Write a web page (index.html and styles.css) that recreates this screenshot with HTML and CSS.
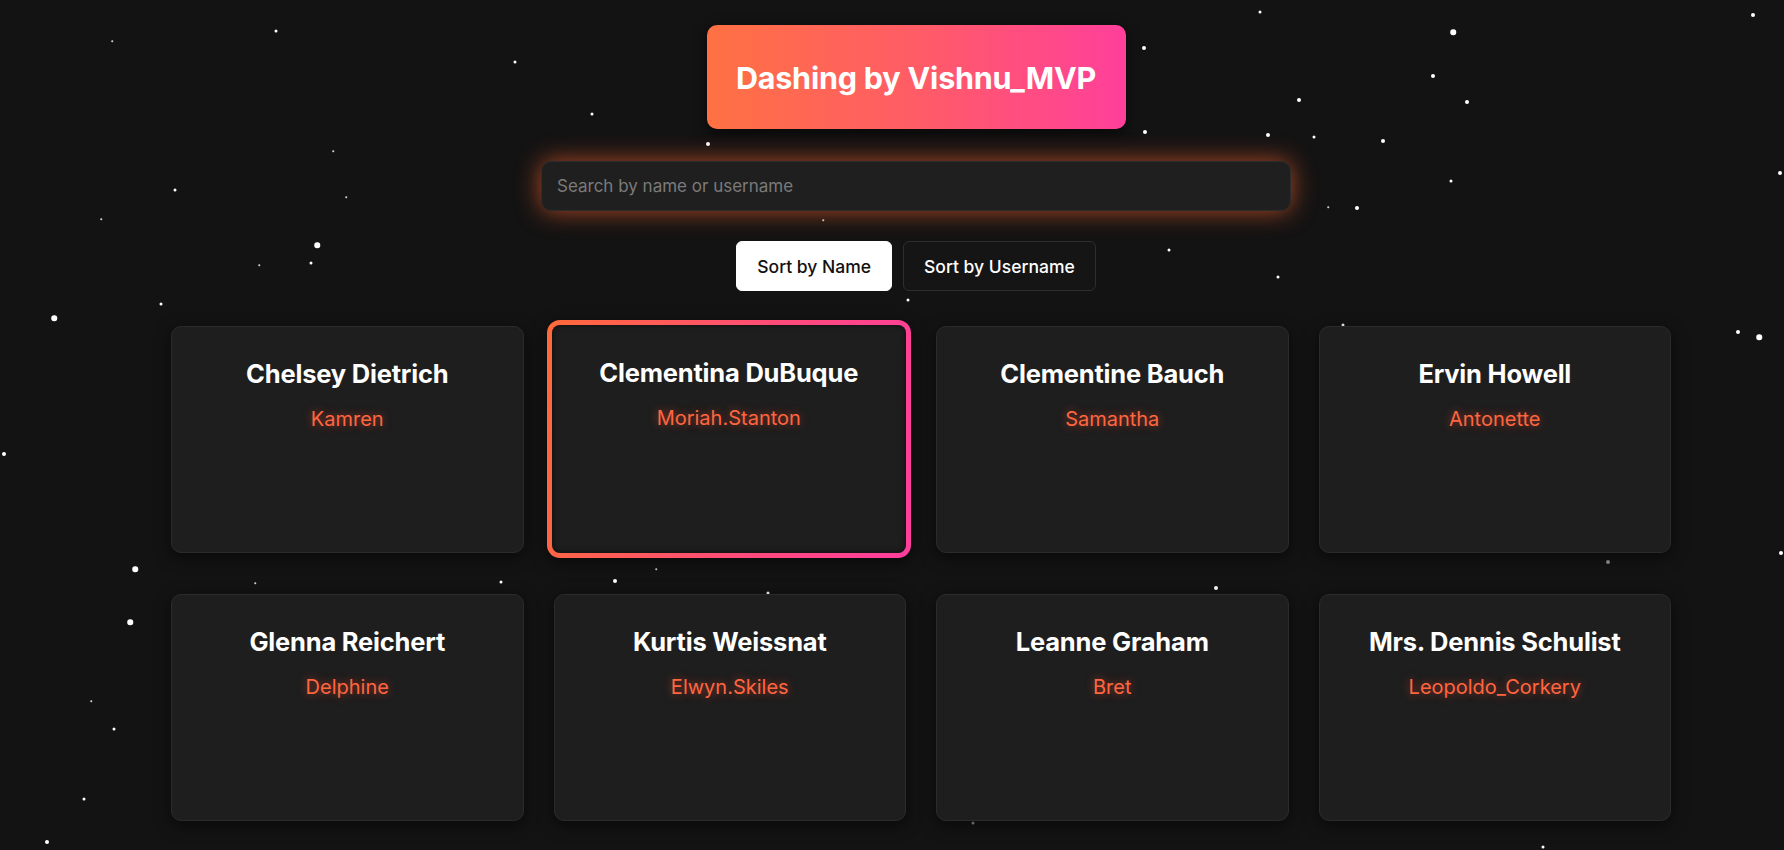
FILE: index.html
```html
<!DOCTYPE html>
<html lang="en">
<head>
<meta charset="utf-8">
<title>Dashing by Vishnu_MVP</title>
<link rel="stylesheet" href="styles.css">
</head>
<body>
<div class="stars">
  <span class="star s1" style="left:276px;top:31px"></span>
  <span class="star s0" style="left:112px;top:41px"></span>
  <span class="star s1" style="left:515px;top:62px"></span>
  <span class="star s1" style="left:592px;top:114px"></span>
  <span class="star s2" style="left:708px;top:144px"></span>
  <span class="star s0" style="left:333px;top:151px"></span>
  <span class="star s1" style="left:175px;top:190px"></span>
  <span class="star s0" style="left:346px;top:197px"></span>
  <span class="star s0" style="left:101px;top:219px"></span>
  <span class="star s0" style="left:823px;top:220px"></span>
  <span class="star s3" style="left:317px;top:245px"></span>
  <span class="star s1" style="left:311px;top:263px"></span>
  <span class="star s0" style="left:259px;top:265px"></span>
  <span class="star s1" style="left:161px;top:304px"></span>
  <span class="star s1" style="left:908px;top:300px"></span>
  <span class="star s3" style="left:54px;top:318px"></span>
  <span class="star s1" style="left:1260px;top:12px"></span>
  <span class="star s2" style="left:1753px;top:15px"></span>
  <span class="star s3" style="left:1453px;top:32px"></span>
  <span class="star s2" style="left:1144px;top:48px"></span>
  <span class="star s2" style="left:1433px;top:76px"></span>
  <span class="star s2" style="left:1299px;top:100px"></span>
  <span class="star s2" style="left:1467px;top:102px"></span>
  <span class="star s2" style="left:1145px;top:132px"></span>
  <span class="star s2" style="left:1268px;top:135px"></span>
  <span class="star s1" style="left:1314px;top:137px"></span>
  <span class="star s2" style="left:1383px;top:141px"></span>
  <span class="star s2" style="left:1780px;top:173px"></span>
  <span class="star s1" style="left:1451px;top:181px"></span>
  <span class="star s0" style="left:1328px;top:207px"></span>
  <span class="star s2" style="left:1357px;top:208px"></span>
  <span class="star s1" style="left:1169px;top:250px"></span>
  <span class="star s1" style="left:1278px;top:277px"></span>
  <span class="star s1" style="left:1343px;top:325px"></span>
  <span class="star s2" style="left:1738px;top:332px"></span>
  <span class="star s3" style="left:1759px;top:337px"></span>
  <span class="star s2" style="left:4px;top:454px"></span>
  <span class="star s3" style="left:135px;top:569px"></span>
  <span class="star s3" style="left:130px;top:622px"></span>
  <span class="star s0" style="left:91px;top:701px"></span>
  <span class="star s1" style="left:114px;top:729px"></span>
  <span class="star s1" style="left:84px;top:799px"></span>
  <span class="star s2" style="left:47px;top:842px"></span>
  <span class="star s0" style="left:255px;top:583px"></span>
  <span class="star s1" style="left:501px;top:582px"></span>
  <span class="star s2" style="left:615px;top:581px"></span>
  <span class="star s0" style="left:656px;top:569px"></span>
  <span class="star s1" style="left:768px;top:593px"></span>
  <span class="star s2" style="left:1216px;top:588px"></span>
  <span class="star s2 dim" style="left:1608px;top:562px"></span>
  <span class="star s2" style="left:1781px;top:553px"></span>
  <span class="star s1 dim" style="left:973px;top:823px"></span>
  <span class="star s1" style="left:1543px;top:847px"></span>
</div>

<main class="page">
  <header class="title-wrap">
    <h1 class="title">Dashing by Vishnu_MVP</h1>
  </header>

  <div class="search-wrap">
    <input class="search" type="text" placeholder="Search by name or username">
  </div>

  <div class="sort-bar">
    <button class="sort-btn active">Sort by Name</button>
    <button class="sort-btn">Sort by Username</button>
  </div>

  <section class="grid">
    <article class="card"><h2 class="card-name">Chelsey Dietrich</h2><p class="card-user">Kamren</p></article>
    <article class="card card-active"><h2 class="card-name">Clementina DuBuque</h2><p class="card-user">Moriah.Stanton</p></article>
    <article class="card"><h2 class="card-name">Clementine Bauch</h2><p class="card-user">Samantha</p></article>
    <article class="card"><h2 class="card-name">Ervin Howell</h2><p class="card-user">Antonette</p></article>
    <article class="card"><h2 class="card-name">Glenna Reichert</h2><p class="card-user">Delphine</p></article>
    <article class="card"><h2 class="card-name">Kurtis Weissnat</h2><p class="card-user">Elwyn.Skiles</p></article>
    <article class="card"><h2 class="card-name">Leanne Graham</h2><p class="card-user">Bret</p></article>
    <article class="card"><h2 class="card-name">Mrs. Dennis Schulist</h2><p class="card-user">Leopoldo_Corkery</p></article>
  </section>
</main>
</body>
</html>
```

FILE: styles.css
```css
* { box-sizing: border-box; }

html, body {
  margin: 0;
  height: 850px;
  overflow: hidden;
}

body {
  background: #131313;
  color: #fff;
  font-family: Inter, "Noto Sans", "DejaVu Sans", sans-serif;
  position: relative;
}

.stars {
  position: absolute;
  inset: 0;
  z-index: 0;
  pointer-events: none;
}

.star {
  position: absolute;
  border-radius: 50%;
  background: #fff;
  transform: translate(-50%, -50%);
}
.s0 { width: 1.5px; height: 1.5px; opacity: .8; }
.s1 { width: 3px; height: 3px; }
.s2 { width: 4px; height: 4px; }
.s3 { width: 5.5px; height: 5.5px; }
.dim { opacity: .55; }

.page {
  position: relative;
  z-index: 1;
  padding: 25px 0 0 48px;
  display: flex;
  flex-direction: column;
}

.title-wrap {
  display: flex;
  justify-content: center;
}

.title {
  margin: 0;
  width: 419px;
  height: 104px;
  display: flex;
  align-items: center;
  justify-content: center;
  border-radius: 10px;
  background: linear-gradient(90deg, #ff7143 0%, #ff5c66 50%, #ff3f9b 100%);
  box-shadow: 0 4px 14px rgba(0, 0, 0, .6);
  font-size: 30.5px;
  font-weight: 700;
  letter-spacing: -0.2px;
  color: #fff;
}

.search-wrap {
  display: flex;
  justify-content: center;
  margin-top: 32px;
}

.search {
  width: 750px;
  height: 50px;
  padding: 0 15px;
  background: #1f1f1f;
  border: 1px solid #2c2c2c;
  border-radius: 10px;
  color: #ddd;
  font-family: inherit;
  font-size: 17px;
  outline: none;
  box-shadow: 0 0 24px rgba(255, 100, 45, .68);
}
.search::placeholder { color: #7a7a7a; }

.sort-bar {
  display: flex;
  justify-content: center;
  gap: 11px;
  margin-top: 30px;
}

.sort-btn {
  height: 50px;
  padding: 0 20px;
  border-radius: 6px;
  border: 1px solid #2e2e2e;
  background: #151515;
  color: #fff;
  font-family: inherit;
  font-size: 17.5px;
  font-weight: 500;
}
.sort-btn.active {
  background: #fff;
  color: #111;
  border-color: #fff;
}

.grid {
  width: 1500px;
  margin: 35px 0 0 calc(50% - 745px);
  display: grid;
  grid-template-columns: repeat(4, 1fr);
  grid-auto-rows: 227px;
  column-gap: 30px;
  row-gap: 41px;
}

.card {
  background: #1e1e1e;
  border: 1px solid #2b2b2b;
  border-radius: 10px;
  box-shadow: 0 4px 16px rgba(0, 0, 0, .55);
  padding: 31px 12px;
  text-align: center;
}

.card-active {
  margin: -6px -5px -5px -7px;
  border: 5px solid transparent;
  border-radius: 13px;
  background:
    linear-gradient(#1e1e1e, #1e1e1e) padding-box,
    linear-gradient(100deg, #ff6a3a 0%, #ff4a7c 60%, #ff3d9e 100%) border-box;
  box-shadow: 0 4px 16px rgba(0, 0, 0, .55), inset 0 0 6px rgba(0,0,0,.6);
  padding-top: 32px;
}

.card-name {
  margin: 0;
  font-size: 25.5px;
  font-weight: 700;
  line-height: 31px;
  letter-spacing: -0.2px;
  color: #fff;
}

.card-user {
  margin: 18px 0 0;
  font-size: 20px;
  line-height: 24px;
  color: #ff6640;
  text-shadow: 0 0 8px rgba(255, 80, 50, .55);
}
```
